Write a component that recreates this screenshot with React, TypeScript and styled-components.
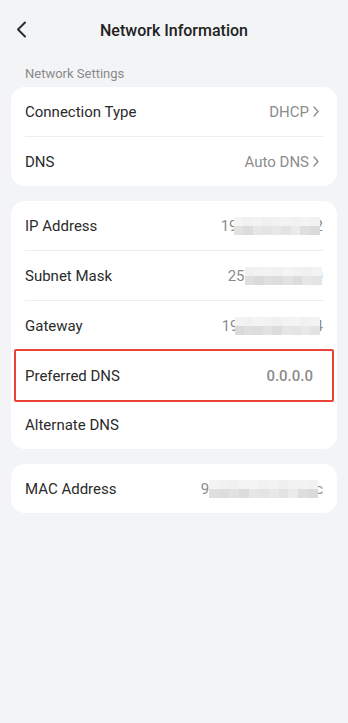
import React from "react";
import styled, { createGlobalStyle } from "styled-components";

const Global = createGlobalStyle`
  html, body { margin: 0; padding: 0; background: #f3f4f6; }
  body { font-family: Roboto, "Noto Sans", sans-serif; -webkit-font-smoothing: antialiased; }
  * { box-sizing: border-box; }
`;

const Page = styled.div`
  width: 348px;
  min-height: 723px;
  background: #f3f4f6;
  display: flex;
  flex-direction: column;
`;

const Header = styled.header`
  height: 60px;
  display: flex;
  align-items: center;
  justify-content: center;
  position: relative;
`;

const BackButton = styled.button`
  position: absolute;
  left: 12px;
  top: 18px;
  width: 18px;
  height: 22px;
  padding: 0;
  border: 0;
  background: none;
  display: flex;
  align-items: center;
  justify-content: center;
`;

const Title = styled.h1`
  margin: 0;
  font-size: 16px;
  font-weight: 500;
  color: #222;
`;

const SectionLabel = styled.div`
  padding: 6px 25px 0;
  height: 27px;
  font-size: 13px;
  color: #8a8a8a;
  line-height: 15px;
`;

const Cards = styled.div`
  display: flex;
  flex-direction: column;
  gap: 15px;
  padding: 0 11px;
`;

const Card = styled.section`
  background: #fff;
  border-radius: 14px;
  display: flex;
  flex-direction: column;
`;

const Row = styled.div<{ $divider?: boolean }>`
  position: relative;
  height: ${(p) => (p.$divider ? 50 : 49)}px;
  padding: ${(p) => (p.$divider ? "1px" : "0")} 14px 0;
  display: flex;
  align-items: center;
  justify-content: space-between;
  &::before {
    content: "";
    display: ${(p) => (p.$divider ? "block" : "none")};
    position: absolute;
    top: 0;
    left: 14px;
    right: 14px;
    height: 1px;
    background: #ececee;
  }
`;

const Label = styled.span`
  font-size: 15px;
  color: #2b2b2b;
`;

const Value = styled.span<{ $inset?: number; $bold?: boolean }>`
  display: flex;
  align-items: center;
  gap: 4px;
  font-size: 15px;
  font-weight: ${(p) => (p.$bold ? 500 : 400)};
  color: #8c8c8c;
  padding-right: ${(p) => p.$inset ?? 0}px;
`;

const Masked = styled.span`
  display: flex;
  align-items: center;
  font-size: 15px;
  color: #8c8c8c;
`;

const MosaicGrid = styled.span<{ $cols: number; $width: number; $ml: number; $mr: number }>`
  position: relative;
  z-index: 1;
  display: grid;
  width: ${(p) => p.$width}px;
  margin: 1px ${(p) => p.$mr}px 0 ${(p) => p.$ml}px;
  grid-template-columns: repeat(${(p) => p.$cols}, 1fr);
  grid-template-rows: 9px 9px;
`;

const Cell = styled.span`
  display: block;
`;

const Highlight = styled.div`
  position: absolute;
  left: 3px;
  right: 3px;
  top: -1px;
  bottom: -2px;
  border: 2px solid #ea4335;
  border-radius: 2px;
  pointer-events: none;
`;

const Chevron = () => (
  <svg width="6" height="11" viewBox="0 0 6 11" fill="none">
    <path d="M1 1l4 4.5L1 10" stroke="#8c8c8c" strokeWidth="1.3" strokeLinecap="round" strokeLinejoin="round" />
  </svg>
);

const top = ["#f4f4f4", "#f1f1f1", "#f3f3f3", "#f0f0f0", "#f2f2f2", "#f3f3f3", "#f1f1f1", "#f4f4f4", "#f2f2f2", "#f0f0f0", "#f3f3f3"];
const bottom = ["#e2e2e2", "#ebebeb", "#dcdcdc", "#dedede", "#e6e6e6", "#dadada", "#e4e4e4", "#dfdfdf", "#e8e8e8", "#dddddd", "#e3e3e3"];

type MaskProps = {
  head: string;
  tail: string;
  width: number;
  cols: number;
  seed: number;
  ml: number;
  mr: number;
};

const MaskedValue = ({ head, tail, width, cols, seed, ml, mr }: MaskProps) => {
  const cells: string[] = [];
  for (let i = 0; i < cols; i++) cells.push(top[(i + seed) % top.length]);
  for (let i = 0; i < cols; i++) cells.push(bottom[(i * 2 + seed) % bottom.length]);
  return (
    <Masked>
      <span>{head}</span>
      <MosaicGrid $cols={cols} $width={width} $ml={ml} $mr={mr}>
        {cells.map((c, i) => (
          <Cell key={i} style={{ background: c }} />
        ))}
      </MosaicGrid>
      <span>{tail}</span>
    </Masked>
  );
};

export default function App() {
  return (
    <>
      <Global />
      <Page>
        <Header>
          <BackButton aria-label="Back">
            <svg width="11" height="17" viewBox="0 0 11 17" fill="none">
              <path d="M9 1.5L2 8.5l7 7" stroke="#2b2b2b" strokeWidth="2" strokeLinecap="round" strokeLinejoin="round" />
            </svg>
          </BackButton>
          <Title>Network Information</Title>
        </Header>
        <SectionLabel>Network Settings</SectionLabel>
        <Cards>
          <Card>
            <Row>
              <Label>Connection Type</Label>
              <Value $inset={4}>
                DHCP <Chevron />
              </Value>
            </Row>
            <Row $divider>
              <Label>DNS</Label>
              <Value $inset={4}>
                Auto DNS <Chevron />
              </Value>
            </Row>
          </Card>
          <Card>
            <Row>
              <Label>IP Address</Label>
              <MaskedValue head="19" tail="2" width={86} cols={9} seed={0} ml={-4} mr={-5} />
            </Row>
            <Row $divider>
              <Label>Subnet Mask</Label>
              <MaskedValue head="25" tail="0" width={77} cols={8} seed={3} ml={0} mr={-7} />
            </Row>
            <Row $divider>
              <Label>Gateway</Label>
              <MaskedValue head="19" tail="4" width={85} cols={9} seed={5} ml={-4} mr={-5} />
            </Row>
            <Row $divider>
              <Label>Preferred DNS</Label>
              <Value $inset={10} $bold>
                0.0.0.0
              </Value>
              <Highlight />
            </Row>
            <Row>
              <Label>Alternate DNS</Label>
            </Row>
          </Card>
          <Card>
            <Row>
              <Label>MAC Address</Label>
              <MaskedValue head="9" tail="c" width={109} cols={11} seed={7} ml={0} mr={-3} />
            </Row>
          </Card>
        </Cards>
      </Page>
    </>
  );
}
